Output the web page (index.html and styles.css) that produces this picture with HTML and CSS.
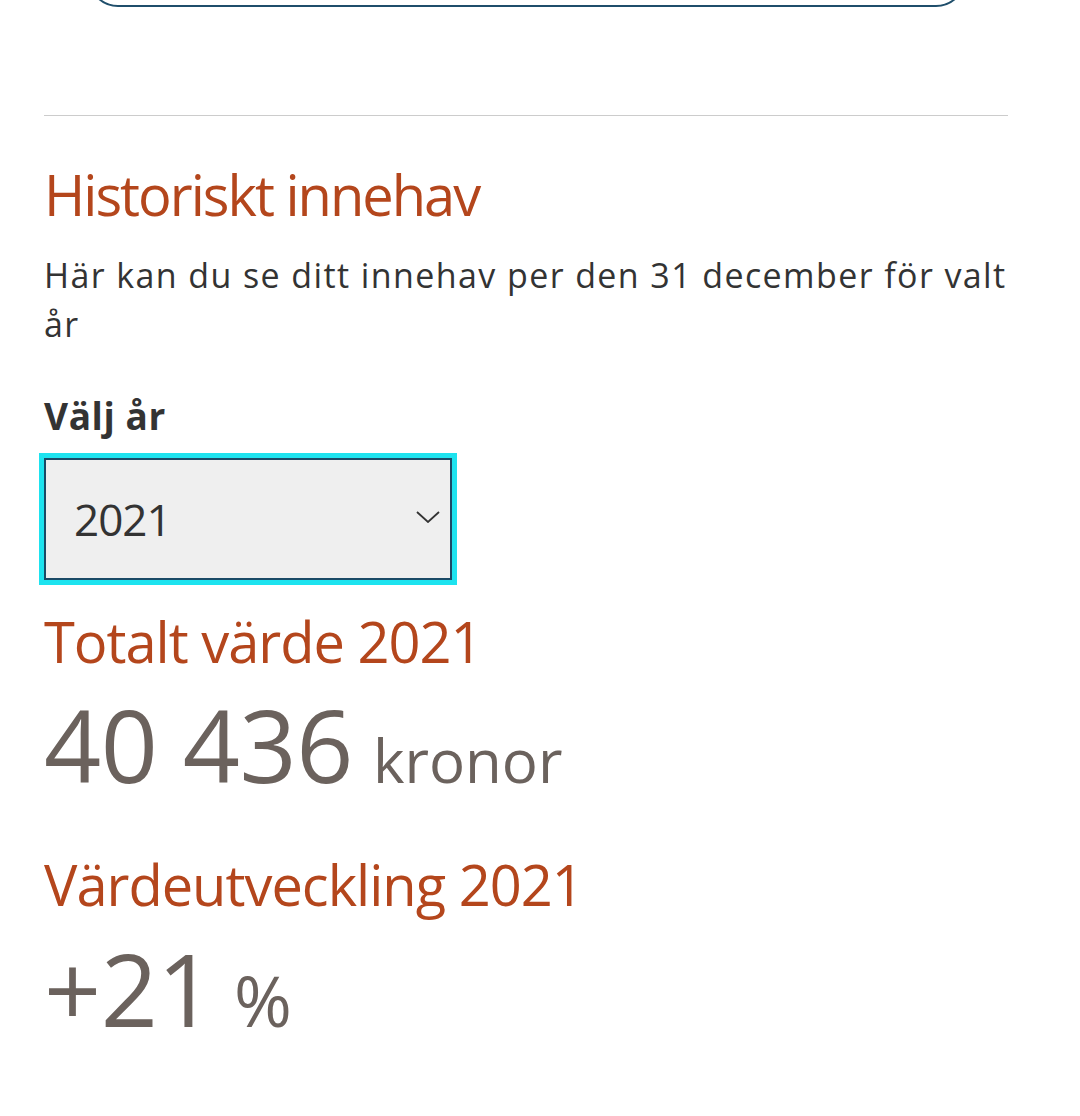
FILE: index.html
```html
<!DOCTYPE html>
<html>
	<head>
		<title>Historiskt innehav</title>
		<meta charset="UTF-8"/>
		<link rel="stylesheet" href="styles.css">
	</head>
	<body>
		<div class="page">

		  <div class="prev-button"></div>

		  <hr class="divider">

		  <h2 class="title">Historiskt innehav</h2>
		  <p class="intro">Här kan du se ditt innehav per den 31 december för valt år</p>

		  <label class="label" for="year">Välj år</label>
		  <div class="select">
			<span class="select-value" id="year">2021</span>
			<svg class="chevron" width="24" height="12" viewBox="0 0 24 12">
			  <path d="M1 1 L12 11 L23 1" fill="none" stroke="#333" stroke-width="1.8"/>
			</svg>
		  </div>

		  <h3 class="subtitle">Totalt värde 2021</h3>
		  <p class="amount"><span class="big">40 436</span><span class="unit">kronor</span></p>

		  <h3 class="subtitle">Värdeutveckling 2021</h3>
		  <p class="amount"><span class="big">+21</span><span class="unit percent">%</span></p>

		</div>
	</body>
</html>
```

FILE: styles.css
```css
* {
  box-sizing: border-box;
}

body {
  margin: 0;
  background: #fff;
  font-family: "Open Sans", "Noto Sans", sans-serif;
  color: #333;
}

.page {
  padding: 0 72px 40px 44px;
}

.prev-button {
  height: 60px;
  margin: -53px 42px 0 44px;
  border: 2px solid #1f4e6b;
  border-radius: 40px;
}

.divider {
  margin: 108px 0 0 0;
  border: 0;
  border-top: 1px solid #ccc;
}

.title, .subtitle {
  font-weight: 400;
  color: #b4461c;
  font-size: 56px;
  line-height: 1.2;
  margin: 0;
}

.title {
  margin-top: 45px;
  letter-spacing: -2px;
}

.subtitle {
  margin-top: 28px;
  letter-spacing: -1px;
}

.intro {
  font-size: 34px;
  line-height: 49px;
  letter-spacing: 1.4px;
  margin: 23px 0 0 0;
  color: #333;
}

.label {
  display: block;
  font-size: 37px;
  font-weight: 700;
  letter-spacing: 0.6px;
  margin-top: 41px;
  color: #333;
}

.select {
  display: flex;
  align-items: center;
  justify-content: space-between;
  width: 408px;
  height: 122px;
  margin-top: 17px;
  padding: 0 10px 0 28px;
  background: #efefef;
  border: 2px solid #1a4a66;
  outline: 5px solid #1de3ef;
}

.select-value {
  font-size: 44px;
  letter-spacing: -1px;
}

.chevron {
  margin-top: -4px;
}

.amount {
  margin: 14px 0 52px 0;
  color: #6b625d;
  line-height: 1.1;
}

.big {
  font-size: 100px;
  letter-spacing: -0.5px;
}

.unit {
  font-size: 60px;
  margin-left: 20px;
}

.percent {
  font-size: 70px;
}
```
